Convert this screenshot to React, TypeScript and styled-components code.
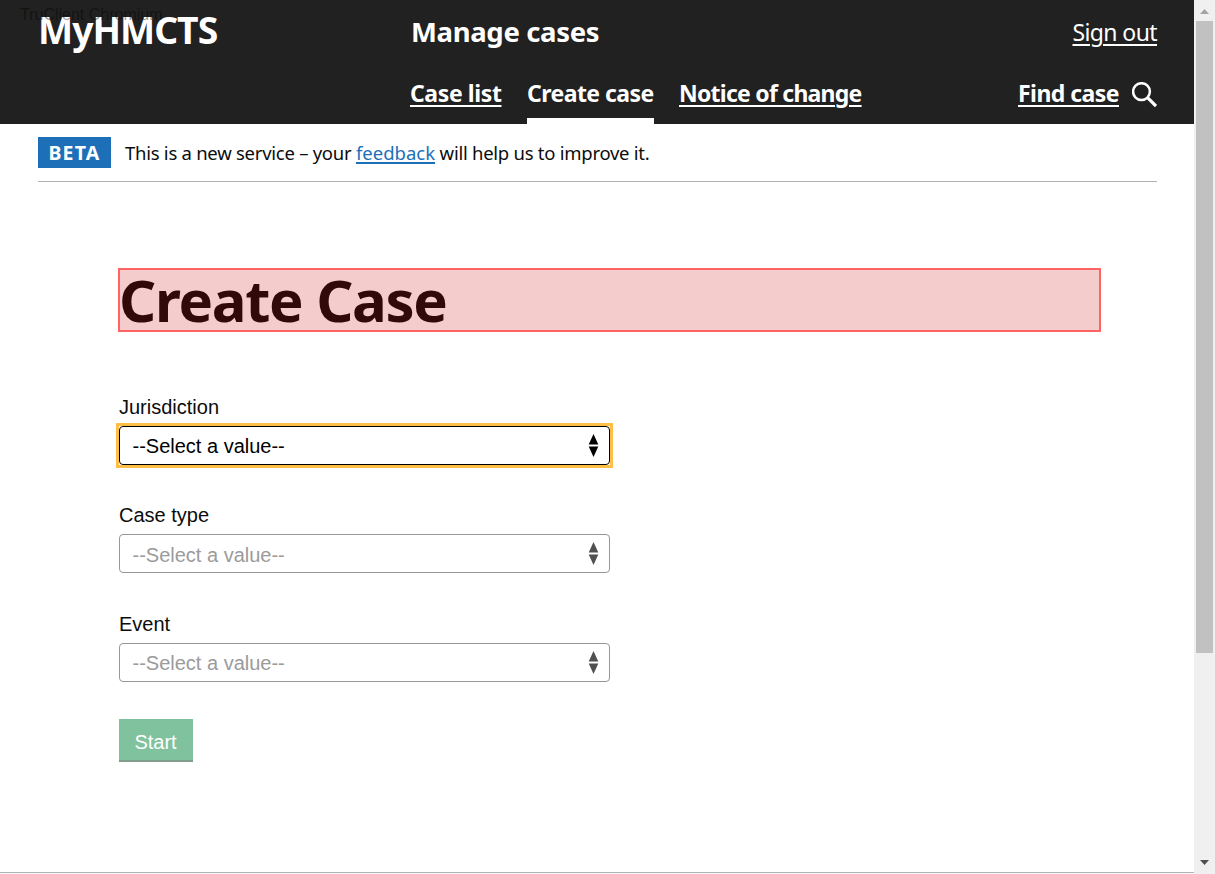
import React from 'react';
import styled, { createGlobalStyle } from 'styled-components';

const Global = createGlobalStyle`
  * { box-sizing: border-box; }
  html, body { margin: 0; padding: 0; overflow: hidden; background: #fff; }
  body { font-family: "Noto Sans", "Open Sans", sans-serif; color: #0b0c0c; }
  h1, p { margin: 0; }
`;

const Window = styled.div`
  position: relative;
  display: flex;
  width: 1215px;
  height: 874px;
  overflow: hidden;
`;
const Page = styled.div`
  display: flex;
  flex-direction: column;
  width: 1194px;
  height: 874px;
`;
const Header = styled.header`
  height: 124px;
  padding: 0 37px 0 38px;
  background: #212121;
  color: #fff;
`;
const TitleBar = styled.div`
  display: flex;
  height: 64px;
`;
const Logo = styled.div`
  width: 373px;
  font-size: 37.3px;
  line-height: 51px;
  padding-top: 4px;
  font-weight: 700;
  letter-spacing: -1px;
  white-space: nowrap;
`;
const Product = styled.div`
  flex: 1;
  font-size: 27.5px;
  line-height: 40px;
  padding-top: 12px;
  font-weight: 700;
  letter-spacing: -0.35px;
  white-space: nowrap;
`;
const Link = styled.a<{ $track?: number }>`
  color: inherit;
  letter-spacing: ${p => p.$track ?? 0}px;
  text-decoration: underline;
  text-decoration-thickness: 2px;
  text-underline-offset: 3px;
  white-space: nowrap;
`;
const SignOut = styled.div`
  padding-top: 16px;
  font-size: 23px;
  line-height: 32px;
`;
const NavBar = styled.nav`
  display: flex;
  height: 60px;
  padding-left: 372px;
  font-size: 23px;
  font-weight: 700;
  line-height: 32px;
`;
const NavItem = styled.div<{ $width: number; $active?: boolean }>`
  width: ${p => p.$width}px;
  height: 60px;
  margin-right: 25px;
  padding-top: 13px;
  white-space: nowrap;
  border-bottom: 6px solid ${p => (p.$active ? '#fff' : 'transparent')};
`;
const NavText = styled.span<{ $track: number }>`
  letter-spacing: ${p => p.$track}px;
`;
const Search = styled.div`
  display: flex;
  gap: 13px;
  margin-left: auto;
  padding-top: 13px;
  svg { margin-top: 5px; }
`;
const PhaseBanner = styled.div`
  display: flex;
  align-items: center;
  height: 58px;
  margin: 0 37px 0 38px;
  border-bottom: 1px solid #b1b4b6;
`;
const Tag = styled.strong`
  width: 73px;
  height: 31px;
  margin-right: 14px;
  background: #1d70b8;
  color: #fff;
  font-size: 19.5px;
  line-height: 31px;
  text-align: center;
  letter-spacing: 1.2px;
`;
const PhaseText = styled.p`
  font-size: 18.5px;
  line-height: 26px;
  letter-spacing: -0.26px;
  white-space: nowrap;
  a { color: #1d70b8; text-underline-offset: 2px; }
`;
const Main = styled.main`
  flex: 1;
  padding: 86px 93px 0 118px;
`;
const Heading = styled.h1`
  height: 64px;
  border: 2px solid #ff6363;
  background: #f5cccc;
  color: #310909;
  font-size: 58px;
  line-height: 59px;
  letter-spacing: -1.3px;
  text-indent: -1px;
`;
const Form = styled.form`
  width: 492px;
  padding: 62px 0 0 1px;
  font-family: "Liberation Sans", Arial, sans-serif;
  font-size: 20px;
`;
const Field = styled.div<{ $gap: number }>`
  margin-bottom: ${p => p.$gap}px;
`;
const Label = styled.label`
  display: block;
  height: 32px;
  line-height: 26px;
`;
const FocusFrame = styled.div<{ $focus?: boolean }>`
  background: #fff;
  outline: ${p => (p.$focus ? '3px solid #ffbf47' : 'none')};
`;
const SelectBox = styled.div<{ $focus?: boolean }>`
  display: flex;
  align-items: flex-start;
  justify-content: space-between;
  height: 39px;
  padding: 7px 10px 0 12.5px;
  border: 1px solid ${p => (p.$focus ? '#000' : '#979797')};
  border-radius: 4px;
  color: ${p => (p.$focus ? '#000' : '#9b9b9b')};
`;
const SelectText = styled.span<{ $drop: number }>`
  line-height: 23px;
  padding-top: ${p => p.$drop}px;
`;
const Start = styled.button`
  display: block;
  width: 74px;
  height: 43px;
  border: 0;
  padding: 3px 1px 0 0;
  background: #80c29d;
  box-shadow: inset 0 -2px 0 #819e8d;
  color: #fff;
  font: 20px "Liberation Sans", Arial, sans-serif;
`;
const Footer = styled.footer`
  height: 2px;
  border-top: 1px solid #b1b4b6;
  background: #f8f8f8;
`;
const Scrollbar = styled.div`
  display: flex;
  flex-direction: column;
  justify-content: space-between;
  width: 21px;
  height: 874px;
  padding: 9px 2px 9px;
  background: #f0f0f0;
  svg { display: block; margin-left: 4px; }
`;
const Thumb = styled.div`
  height: 632px;
  margin: 7px 0 auto;
  background: #c1c1c1;
`;
const Watermark = styled.div`
  position: absolute;
  top: 5px;
  left: 20px;
  color: rgba(0, 0, 0, 0.42);
  font: 16px/19px "Liberation Sans", Arial, sans-serif;
  white-space: nowrap;
`;

interface SelectFieldProps {
  label: string;
  focus?: boolean;
  gap: number;
  drop?: number;
}

const SelectField = ({ label, focus, gap, drop = 1 }: SelectFieldProps) => (
  <Field $gap={gap}>
    <Label>{label}</Label>
    <FocusFrame $focus={focus}>
      <SelectBox $focus={focus}>
        <SelectText $drop={drop}>--Select a value--</SelectText>
        <svg width="11" height="23" viewBox="0 0 11 23" fill={focus ? '#000' : '#505050'}>
          <path d="M5.5 0 10.3 10.5H.7zM.7 12.5h9.6L5.5 23z" />
        </svg>
      </SelectBox>
    </FocusFrame>
  </Field>
);

export default function App() {
  return (
    <Window>
      <Global />
      <Page>
        <Header>
          <TitleBar>
            <Logo>MyHMCTS</Logo>
            <Product>Manage cases</Product>
            <SignOut><Link $track={-0.6}>Sign out</Link></SignOut>
          </TitleBar>
          <NavBar>
            <NavItem $width={92}><Link $track={-0.4}>Case list</Link></NavItem>
            <NavItem $width={127} $active><NavText $track={-0.55}>Create case</NavText></NavItem>
            <NavItem $width={182}><Link $track={-0.75}>Notice of change</Link></NavItem>
            <Search>
              <Link $track={-0.55}>Find case</Link>
              <svg width="25" height="26" viewBox="0 0 25 26" fill="none" stroke="#fff">
                <circle cx="9.5" cy="9.6" r="8.4" strokeWidth="2.5" />
                <path d="m15.5 15.6 8.5 8.5" strokeWidth="3.2" />
              </svg>
            </Search>
          </NavBar>
        </Header>
        <PhaseBanner>
          <Tag>BETA</Tag>
          <PhaseText>This is a new service – your <Link $track={0}>feedback</Link> will help us to improve it.</PhaseText>
        </PhaseBanner>
        <Main>
          <Heading>Create Case</Heading>
          <Form>
            <SelectField label="Jurisdiction" focus gap={37} />
            <SelectField label="Case type" gap={38} drop={2} />
            <SelectField label="Event" gap={37} />
            <Start type="button">Start</Start>
          </Form>
        </Main>
        <Footer />
      </Page>
      <Scrollbar>
        <svg width="9" height="5" viewBox="0 0 9 5" fill="#a3a3a3"><path d="M4.5 0 9 5H0z" /></svg>
        <Thumb />
        <svg width="9" height="5" viewBox="0 0 9 5" fill="#505050"><path d="M0 0h9L4.5 5z" /></svg>
      </Scrollbar>
      <Watermark>TruClient Chromium</Watermark>
    </Window>
  );
}
